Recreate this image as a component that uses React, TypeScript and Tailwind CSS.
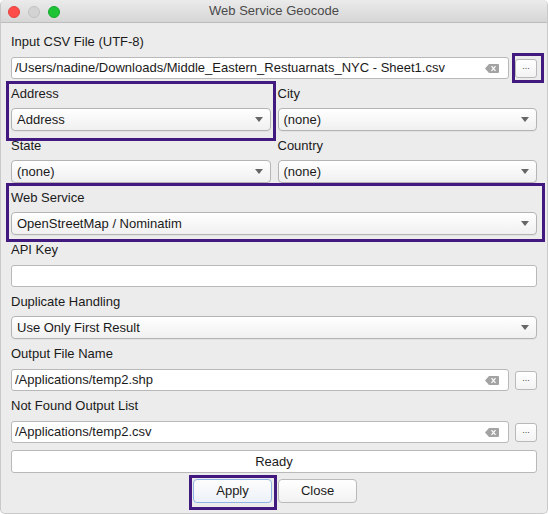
import React from "react";

const font = { fontFamily: '"Liberation Sans", Arial, sans-serif' };

function ClearIcon() {
  return (
    <svg width="14" height="9" viewBox="0 0 14 9" className="shrink-0">
      <path d="M4 0 H13 a1 1 0 0 1 1 1 V8 a1 1 0 0 1 -1 1 H4 L0 4.5 Z" fill="#a3a3a3" />
      <path d="M6.5 2.2 L10.5 6.8 M10.5 2.2 L6.5 6.8" stroke="#fff" strokeWidth="1.2" />
    </svg>
  );
}

function Arrow() {
  return (
    <svg width="8" height="5" viewBox="0 0 8 5" className="shrink-0">
      <path d="M0 0 H8 L4 5 Z" fill="#666" />
    </svg>
  );
}

function Label({ children }: { children: React.ReactNode }) {
  return <div className="h-[16px] leading-[16px] text-[13px] text-[#1a1a1a] whitespace-nowrap">{children}</div>;
}

function Select({ value }: { value: string }) {
  return (
    <div className="mt-[6px] h-[23px] flex items-center justify-between rounded-[4px] border border-[#b4b4b4] bg-gradient-to-b from-white to-[#f0f0f0] pl-[5px] pr-[7px] text-[13px] text-[#1a1a1a] shadow-[0_1px_0_rgba(0,0,0,0.04)]">
      <span className="whitespace-nowrap">{value}</span>
      <Arrow />
    </div>
  );
}

function TextInput({ value, clear }: { value: string; clear?: boolean }) {
  return (
    <div className="h-[22px] flex-1 flex items-center justify-between rounded-[3px] border border-[#b9b9b9] bg-white pl-[3px] pr-[9px] text-[13px] text-[#1a1a1a]">
      <span className="whitespace-nowrap overflow-hidden">{value}</span>
      {clear && <ClearIcon />}
    </div>
  );
}

function DotsButton() {
  return (
    <div className="ml-[6px] w-[22px] h-[19px] flex items-center justify-center rounded-[3px] border border-[#b9b9b9] bg-gradient-to-b from-white to-[#f3f3f3] text-[9px] text-[#444] leading-none pb-[3px]">
      ...
    </div>
  );
}

function FileRow({ value }: { value: string }) {
  return (
    <div className="mt-[7px] flex items-center">
      <TextInput value={value} clear />
      <DotsButton />
    </div>
  );
}

function Field({ label, children }: { label: string; children: React.ReactNode }) {
  return (
    <div className="mb-[7px]">
      <Label>{label}</Label>
      {children}
    </div>
  );
}

export default function App() {
  return (
    <div style={font} className="relative w-[548px] h-[514px] overflow-hidden rounded-[5px] bg-[#ececec] border-x border-b border-[#c9c9c9]">
      {/* title bar */}
      <div className="relative h-[23px] border-b border-[#bdbdbd] bg-gradient-to-b from-[#ebebeb] to-[#d6d6d6] flex items-center justify-center">
        <div className="absolute left-[7px] top-[6px] flex gap-[8px]">
          <div className="w-[12px] h-[12px] rounded-full bg-[#fe4d4a] border border-[#e0443e]" />
          <div className="w-[12px] h-[12px] rounded-full bg-[#d3d3d3] border border-[#c2c2c2]" />
          <div className="w-[12px] h-[12px] rounded-full bg-[#1cc436] border border-[#17a92e]" />
        </div>
        <span className="text-[13px] text-[#4a4a4a]">Web Service Geocode</span>
      </div>

      <div className="px-[10px] pt-[11px]">
        <Field label="Input CSV File (UTF-8)">
          <FileRow value="/Users/nadine/Downloads/Middle_Eastern_Restuarnats_NYC - Sheet1.csv" />
        </Field>

        <div className="grid grid-cols-2 gap-x-[7px]">
          <Field label="Address">
            <Select value="Address" />
          </Field>
          <Field label="City">
            <Select value="(none)" />
          </Field>
          <Field label="State">
            <Select value="(none)" />
          </Field>
          <Field label="Country">
            <Select value="(none)" />
          </Field>
        </div>

        <Field label="Web Service">
          <Select value="OpenStreetMap / Nominatim" />
        </Field>

        <Field label="API Key">
          <div className="mt-[7px] flex">
            <TextInput value="" />
          </div>
        </Field>

        <Field label="Duplicate Handling">
          <Select value="Use Only First Result" />
        </Field>

        <Field label="Output File Name">
          <FileRow value="/Applications/temp2.shp" />
        </Field>

        <Field label="Not Found Output List">
          <FileRow value="/Applications/temp2.csv" />
        </Field>

        <div className="mt-[1px] h-[23px] flex items-center justify-center rounded-[3px] border border-[#b9b9b9] bg-white text-[13px] text-[#1a1a1a]">
          Ready
        </div>

        <div className="mt-[6px] flex justify-center gap-[6px] pl-[2px]">
          <div className="w-[79px] h-[24px] flex items-center justify-center rounded-[4px] border border-[#8fb3e3] bg-gradient-to-b from-[#fdfdfd] to-[#edf2f8] text-[13px] text-[#1a1a1a]">
            Apply
          </div>
          <div className="w-[79px] h-[24px] flex items-center justify-center rounded-[4px] border border-[#b9b9b9] bg-gradient-to-b from-white to-[#f2f2f2] text-[13px] text-[#1a1a1a]">
            Close
          </div>
        </div>
      </div>

      {/* annotation highlights */}
      <div className="absolute left-[511px] top-[53px] w-[32px] h-[30px] border-[3px] border-[#42197e] pointer-events-none" />
      <div className="absolute left-[5px] top-[81px] w-[270px] h-[60px] border-[3px] border-[#42197e] pointer-events-none" />
      <div className="absolute left-[5px] top-[183px] w-[539px] h-[59px] border-[3px] border-[#42197e] pointer-events-none" />
      <div className="absolute left-[188px] top-[475px] w-[88px] h-[35px] border-[3px] border-[#42197e] pointer-events-none" />
    </div>
  );
}
